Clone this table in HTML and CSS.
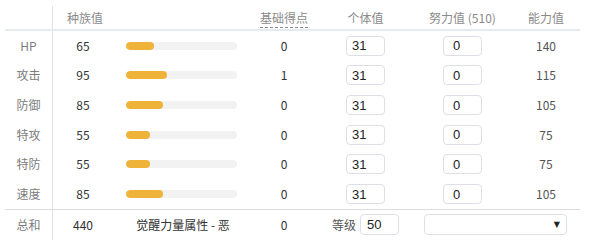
FILE: index.html
```html
<!DOCTYPE html>
<html lang="zh">
<head>
<meta charset="utf-8">
<link rel="stylesheet" href="styles.css">
</head>
<body>
<table class="stats">
  <thead>
    <tr>
      <th class="c-label"></th>
      <th class="c-base th-left">种族值</th>
      <th class="c-bar"></th>
      <th class="c-ev0"><span class="dashed">基础得点</span></th>
      <th class="c-iv">个体值</th>
      <th class="c-ev">努力值 (510)</th>
      <th class="c-stat">能力值</th>
    </tr>
  </thead>
  <tbody>
    <tr>
      <td class="c-label">HP</td><td class="c-base">65</td>
      <td class="c-bar"><div class="bar"><div class="fill" style="width:28.3px"></div></div></td>
      <td class="c-ev0">0</td>
      <td class="c-iv"><input class="num" value="31"></td>
      <td class="c-ev"><input class="num ev" value="0"></td>
      <td class="c-stat">140</td>
    </tr>
    <tr>
      <td class="c-label">攻击</td><td class="c-base">95</td>
      <td class="c-bar"><div class="bar"><div class="fill" style="width:41.4px"></div></div></td>
      <td class="c-ev0">1</td>
      <td class="c-iv"><input class="num" value="31"></td>
      <td class="c-ev"><input class="num ev" value="0"></td>
      <td class="c-stat">115</td>
    </tr>
    <tr>
      <td class="c-label">防御</td><td class="c-base">85</td>
      <td class="c-bar"><div class="bar"><div class="fill" style="width:37px"></div></div></td>
      <td class="c-ev0">0</td>
      <td class="c-iv"><input class="num" value="31"></td>
      <td class="c-ev"><input class="num ev" value="0"></td>
      <td class="c-stat">105</td>
    </tr>
    <tr>
      <td class="c-label">特攻</td><td class="c-base">55</td>
      <td class="c-bar"><div class="bar"><div class="fill" style="width:23.9px"></div></div></td>
      <td class="c-ev0">0</td>
      <td class="c-iv"><input class="num" value="31"></td>
      <td class="c-ev"><input class="num ev" value="0"></td>
      <td class="c-stat">75</td>
    </tr>
    <tr>
      <td class="c-label">特防</td><td class="c-base">55</td>
      <td class="c-bar"><div class="bar"><div class="fill" style="width:23.9px"></div></div></td>
      <td class="c-ev0">0</td>
      <td class="c-iv"><input class="num" value="31"></td>
      <td class="c-ev"><input class="num ev" value="0"></td>
      <td class="c-stat">75</td>
    </tr>
    <tr>
      <td class="c-label">速度</td><td class="c-base">85</td>
      <td class="c-bar"><div class="bar"><div class="fill" style="width:37px"></div></div></td>
      <td class="c-ev0">0</td>
      <td class="c-iv"><input class="num" value="31"></td>
      <td class="c-ev"><input class="num ev" value="0"></td>
      <td class="c-stat">105</td>
    </tr>
  </tbody>
  <tfoot>
    <tr>
      <td class="c-label">总和</td>
      <td class="c-base">440</td>
      <td class="c-bar hp-type">觉醒力量属性 - 恶</td>
      <td class="c-ev0">0</td>
      <td class="c-iv"><span class="level"><span class="level-label">等级</span><input class="num lvl" value="50"></span></td>
      <td colspan="2" class="c-sel"><div class="select"><span class="arrow">▼</span></div></td>
    </tr>
  </tfoot>
</table>
</body>
</html>
```
FILE: styles.css
```css
html, body {
  margin: 0;
  padding: 0;
  background: #ffffff;
}
body {
  padding: 6px 0 0 5px;
  font-family: "Noto Sans CJK SC", "Noto Sans", sans-serif;
  font-size: 12px;
  color: #333;
}
.stats {
  border-collapse: separate;
  border-spacing: 0;
  table-layout: fixed;
  width: 575px;
}
.stats th, .stats td {
  padding: 0;
  text-align: center;
  vertical-align: middle;
  white-space: nowrap;
}
.stats th {
  font-weight: normal;
  color: #8a8a8a;
  height: 23px;
  border-bottom: 2px solid #e6e9ed;
  line-height: 16px;
}
.stats tbody td {
  height: 29.67px;
  line-height: 16px;
}
.stats tfoot td {
  height: 30px;
  border-top: 1px solid #dcdcdc;
}
.c-label {
  width: 47px;
  border-right: 1px solid #dfe3e8;
  color: #8a8a8a;
}
td.c-label { color: #7d7d7d; }
.c-base { width: 60px; }
.stats th.th-left { text-align: left; text-indent: 14px; }
.c-bar { width: 137px; }
td.hp-type { padding-left: 3px; }
.c-ev0 { width: 68px; }
.c-iv { width: 95px; }
.c-ev { width: 99px; }
.c-stat { width: 68px; }
td.c-stat { color: #555; }
.dashed {
  border-bottom: 1px dashed #8a8a8a;
  padding-bottom: 1px;
}
.bar {
  margin-left: 13px;
  width: 111px;
  height: 8px;
  border-radius: 4px;
  background: #f2f2f2;
  overflow: hidden;
}
.fill {
  height: 8px;
  border-radius: 4px;
  background: #efb33a;
}
.num {
  box-sizing: border-box;
  width: 39px;
  height: 20px;
  padding: 0 0 0 5px;
  border: 1px solid #dcdfe5;
  border-radius: 4px;
  font-family: "Liberation Sans", Arial, sans-serif;
  font-size: 13px;
  color: #222;
  background: #fff;
  outline: none;
  display: block;
  margin: 0 auto;
}
.num.ev { padding-left: 9px; }
.level {
  display: inline-flex;
  align-items: center;
  gap: 4px;
}
.level-label { color: #555; }
.lvl { height: 21px; margin: 0; padding-left: 6px; }
.select {
  box-sizing: border-box;
  margin-left: 11px;
  width: 143px;
  height: 21px;
  border: 1px solid #dcdfe5;
  border-radius: 4px;
  display: flex;
  align-items: center;
  justify-content: flex-end;
  padding-right: 6px;
}
.arrow {
  font-family: "DejaVu Sans", sans-serif;
  font-size: 8px;
  color: #222;
}
```
